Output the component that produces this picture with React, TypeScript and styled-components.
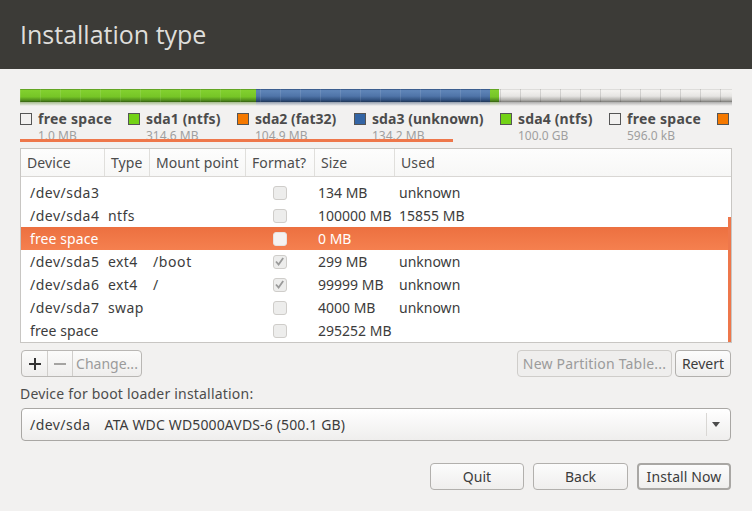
import React from "react";
import styled, { createGlobalStyle } from "styled-components";

const Global = createGlobalStyle`
  html, body { margin: 0; padding: 0; background: #f2f1f0; }
  body { font-family: "Noto Sans", "Open Sans", sans-serif; font-size: 14px; color: #3c3c3c; }
  * { box-sizing: border-box; }
`;
const Page = styled.div`width: 752px; height: 511px; overflow: hidden; display: flex; flex-direction: column; background: #f2f1f0;`;
const Header = styled.header`height: 69px; background: #3c3b37; padding: 0 20px 2px; display: flex; align-items: center;`;
const Title = styled.h1`margin: 0; font-size: 25px; font-weight: 400; color: #dfdedb; letter-spacing: 0; font-family: "Open Sans", sans-serif;`;
const Main = styled.main`padding: 20px 20px 0; display: flex; flex-direction: column;`;

const palette = {
  green: { body: "linear-gradient(#4f8a1c 0, #82d02f 10%, #76c526 60%, #4f8a1c 88%, #33600f 100%)", glow: "rgba(70,120,20,.45)", tick: "rgba(255,255,255,.1)" },
  blue: { body: "linear-gradient(#2c4c7c 0, #5f85b8 12%, #4f74a8 55%, #30507e 85%, #1f3656 100%)", glow: "rgba(30,55,90,.45)", tick: "rgba(255,255,255,.1)" },
  gray: { body: "linear-gradient(#d4d3d0 0, #f4f3f1 12%, #e6e5e3 55%, #b0afac 85%, #777673 100%)", glow: "rgba(70,70,70,.4)", tick: "rgba(0,0,0,.12)" },
};
const Bar = styled.div`display: flex; height: 13px; width: 712px;`;
const Segment = styled.div<{ $w: number; $x: number; $kind: "green" | "blue" | "gray" }>`
  position: relative;
  width: ${p => p.$w}px;
  background:
    linear-gradient(90deg, ${p => palette[p.$kind].tick} 0 1px, transparent 1px) ${p => -p.$x}px 0 / 20px 100% repeat-x,
    ${p => palette[p.$kind].body};
  &::after {
    content: ""; position: absolute; left: 0; right: 0; top: 100%; height: 4px;
    background: linear-gradient(${p => palette[p.$kind].glow}, transparent);
  }
`;
const LegendWrap = styled.div`position: relative; height: 30px; margin-top: 10px; overflow: hidden; width: 712px;`;
const Legend = styled.div`display: flex; width: 760px;`;
const LegendItem = styled.div<{ $w: number }>`flex: 0 0 ${p => p.$w}px; display: flex; gap: 6px;`;
const Swatch = styled.span<{ $c: string }>`flex: none; width: 12px; height: 12px; margin-top: 1px; background: ${p => p.$c}; border: 1px solid #555;`;
const LegendText = styled.div`display: flex; flex-direction: column; white-space: nowrap;`;
const LegendName = styled.span<{ $ls: number }>`font-weight: 700; font-size: 14px; line-height: 14px; color: #4c4c4c; letter-spacing: ${p => p.$ls}px;`;
const LegendSize = styled.span`font-size: 12px; line-height: 14px; margin-top: 3px; color: #9f9f9f;`;
const HScroll = styled.div`position: absolute; left: 0; bottom: 0; width: 433px; height: 3px; background: #ee774b;`;

const Table = styled.div`position: relative; margin-top: 6px; width: 712px; height: 195px; border: 1px solid #c8c6c3; background: #fff; overflow: hidden;`;
const cols = "84px 45px 96px 69px 80px 1fr";
const HeadRow = styled.div`display: grid; grid-template-columns: ${cols}; height: 28px; border-bottom: 1px solid #d9d7d4; background: linear-gradient(#fdfdfd, #f7f7f6);`;
const HeadCell = styled.div`display: flex; align-items: center; padding-left: 6px; font-size: 14px; letter-spacing: 0.1px; color: #4c4c4c; border-right: 1px solid #e0dfdc; white-space: nowrap; &:last-child { border-right: 0; }`;
const Rows = styled.div`height: 165px; overflow: hidden;`;
const RowList = styled.div`margin-top: -19px;`;
const Row = styled.div<{ $sel?: boolean }>`
  display: grid; grid-template-columns: ${cols}; height: 23px; align-items: center;
  color: ${p => p.$sel ? "#fff" : "#3c3c3c"};
  background: ${p => p.$sel ? "linear-gradient(#ec7040, #f5804f)" : "transparent"};
`;
const Cell = styled.div<{ $pad?: number; $ls?: number }>`padding-left: ${p => p.$pad ?? 3}px; white-space: nowrap; font-size: 14px; letter-spacing: ${p => p.$ls ?? 0}px;`;
const CheckCell = styled.div`display: flex; justify-content: center; padding-right: 2px;`;
const Check = styled.span<{ $sel?: boolean }>`
  width: 14px; height: 14px; border-radius: 3px; display: flex; align-items: center; justify-content: center;
  border: 1px solid ${p => p.$sel ? "#e6e3e0" : "#cfcdca"};
  background: ${p => p.$sel ? "#f5f2f0" : "#ededec"};
`;
const VScroll = styled.div`position: absolute; right: 0; top: 68px; bottom: 0; width: 3px; background: #ee774b;`;

const ToolRow = styled.div`display: flex; justify-content: space-between; margin: 7px 1px 0; height: 27px;`;
const Group = styled.div`display: flex; align-items: stretch; gap: 3px;`;
const Linked = styled.div`display: flex; border: 1px solid #b9b7b4; border-radius: 4px; overflow: hidden; background: linear-gradient(#fbfbfa, #efeeed);`;
const Seg = styled.button<{ $w: number }>`
  width: ${p => p.$w}px; padding: 0; border: 0; border-right: 1px solid #d0cecb; background: transparent;
  display: flex; align-items: center; justify-content: center;
  font: inherit; font-size: 14px; line-height: 1; color: #9b9b9b;
  &:last-child { border-right: 0; }
`;
const Btn = styled.button<{ $w: number; $disabled?: boolean; $def?: boolean; $ls?: number }>`
  width: ${p => p.$w}px; padding: 0; height: 100%; border-radius: 4px; font: inherit; font-size: 14px;
  letter-spacing: ${p => p.$ls ?? 0}px;
  color: ${p => p.$disabled ? "#9b9b9b" : "#3c3c3c"};
  border: ${p => p.$def ? "2px solid #a9a7a4" : `1px solid ${p.$disabled ? "#cfcdca" : "#b2b0ad"}`};
  background: ${p => p.$disabled ? "#efeeed" : "linear-gradient(#fcfcfc, #efeeed)"};
  white-space: nowrap;
`;
const Label = styled.div`margin-top: 7px; height: 20px; line-height: 20px; font-size: 14px; letter-spacing: 0.2px; color: #4c4c4c;`;
const Combo = styled.div`margin: 4px 1px 0; height: 33px; display: flex; align-items: center; border: 1px solid #a9a7a4; border-radius: 4px; background: linear-gradient(#fff, #efeeed);`;
const ComboText = styled.div`flex: 1; padding-left: 8px; display: flex; gap: 14px; font-size: 14px; letter-spacing: 0.14px;`;
const ComboDevice = styled.span`letter-spacing: 0.45px;`;
const ComboArrow = styled.div`width: 24px; height: 23px; border-left: 1px solid #d9d7d4; display: flex; align-items: center; padding-left: 5px;`;
const Arrow = styled.span`width: 0; height: 0; border-left: 4px solid transparent; border-right: 4px solid transparent; border-top: 5px solid #4c4c4c;`;
const Footer = styled.div`display: flex; justify-content: flex-end; gap: 9px; margin: 22px 1px 0; height: 27px;`;

const Tick = () => (
  <svg width="11" height="11" viewBox="0 0 11 11"><path d="M2 5.5 L4.6 8.6 L9.2 2" fill="none" stroke="#9a9a9a" strokeWidth="1.8" /></svg>
);
const PlusIcon = () => (
  <svg width="12" height="12" viewBox="0 0 12 12"><path d="M6 0V12M0 6H12" fill="none" stroke="#333" strokeWidth="2" /></svg>
);
const MinusIcon = () => (
  <svg width="12" height="12" viewBox="0 0 12 12"><path d="M0 6H12" fill="none" stroke="#a5a4a2" strokeWidth="2" /></svg>
);

const legend = [
  { c: "#f2f1f0", n: "free space", s: "1.0 MB", w: 108, ls: 0.25 },
  { c: "#73d216", n: "sda1 (ntfs)", s: "314.6 MB", w: 109, ls: 0.15 },
  { c: "#f57900", n: "sda2 (fat32)", s: "104.9 MB", w: 117, ls: 0 },
  { c: "#3465a4", n: "sda3 (unknown)", s: "134.2 MB", w: 146, ls: 0.05 },
  { c: "#73d216", n: "sda4 (ntfs)", s: "100.0 GB", w: 109, ls: 0.15 },
  { c: "#f2f1f0", n: "free space", s: "596.0 kB", w: 108, ls: 0.25 },
  { c: "#f57900", n: "", s: "", w: 30, ls: 0 },
];
const rows: { d: string; t?: string; m?: string; c?: boolean; s: string; u?: string; sel?: boolean }[] = [
  { d: "/dev/sda2", t: "fat32", s: "104 MB", u: "unknown" },
  { d: "/dev/sda3", s: "134 MB", u: "unknown" },
  { d: "/dev/sda4", t: "ntfs", s: "100000 MB", u: "15855 MB" },
  { d: "free space", s: "0 MB", sel: true },
  { d: "/dev/sda5", t: "ext4", m: "/boot", c: true, s: "299 MB", u: "unknown" },
  { d: "/dev/sda6", t: "ext4", m: "/", c: true, s: "99999 MB", u: "unknown" },
  { d: "/dev/sda7", t: "swap", s: "4000 MB", u: "unknown" },
  { d: "free space", s: "295252 MB" },
];

export default function App() {
  return (
    <Page>
      <Global />
      <Header><Title>Installation type</Title></Header>
      <Main>
        <Bar>
          <Segment $w={236} $x={0} $kind="green" />
          <Segment $w={234} $x={236} $kind="blue" />
          <Segment $w={9} $x={470} $kind="green" />
          <Segment $w={233} $x={479} $kind="gray" />
        </Bar>
        <LegendWrap>
          <Legend>
            {legend.map((l, i) => (
              <LegendItem key={i} $w={l.w}>
                <Swatch $c={l.c} />
                <LegendText>
                  <LegendName $ls={l.ls}>{l.n}</LegendName>
                  <LegendSize>{l.s}</LegendSize>
                </LegendText>
              </LegendItem>
            ))}
          </Legend>
          <HScroll />
        </LegendWrap>
        <Table>
          <HeadRow>
            {["Device", "Type", "Mount point", "Format?", "Size", "Used"].map(h => <HeadCell key={h}>{h}</HeadCell>)}
          </HeadRow>
          <Rows>
            <RowList>
              {rows.map((r, i) => (
                <Row key={i} $sel={r.sel}>
                  <Cell $pad={9} $ls={r.d.startsWith("/") ? 0.5 : 0.1}>{r.d}</Cell>
                  <Cell $ls={0.4}>{r.t}</Cell>
                  <Cell $ls={0.6}>{r.m}</Cell>
                  <CheckCell><Check $sel={r.sel}>{r.c && <Tick />}</Check></CheckCell>
                  <Cell>{r.s}</Cell>
                  <Cell $pad={4}>{r.u}</Cell>
                </Row>
              ))}
            </RowList>
          </Rows>
          <VScroll />
        </Table>
        <ToolRow>
          <Linked>
            <Seg $w={26} aria-label="Add"><PlusIcon /></Seg>
            <Seg $w={25} aria-label="Remove"><MinusIcon /></Seg>
            <Seg $w={68}>Change...</Seg>
          </Linked>
          <Group>
            <Btn $w={155} $disabled $ls={0.2}>New Partition Table...</Btn>
            <Btn $w={56}>Revert</Btn>
          </Group>
        </ToolRow>
        <Label>Device for boot loader installation:</Label>
        <Combo>
          <ComboText><ComboDevice>/dev/sda</ComboDevice><span>ATA WDC WD5000AVDS-6 (500.1 GB)</span></ComboText>
          <ComboArrow><Arrow /></ComboArrow>
        </Combo>
        <Footer>
          <Btn $w={94}>Quit</Btn>
          <Btn $w={95}>Back</Btn>
          <Btn $w={94} $def $ls={0.1}>Install Now</Btn>
        </Footer>
      </Main>
    </Page>
  );
}
